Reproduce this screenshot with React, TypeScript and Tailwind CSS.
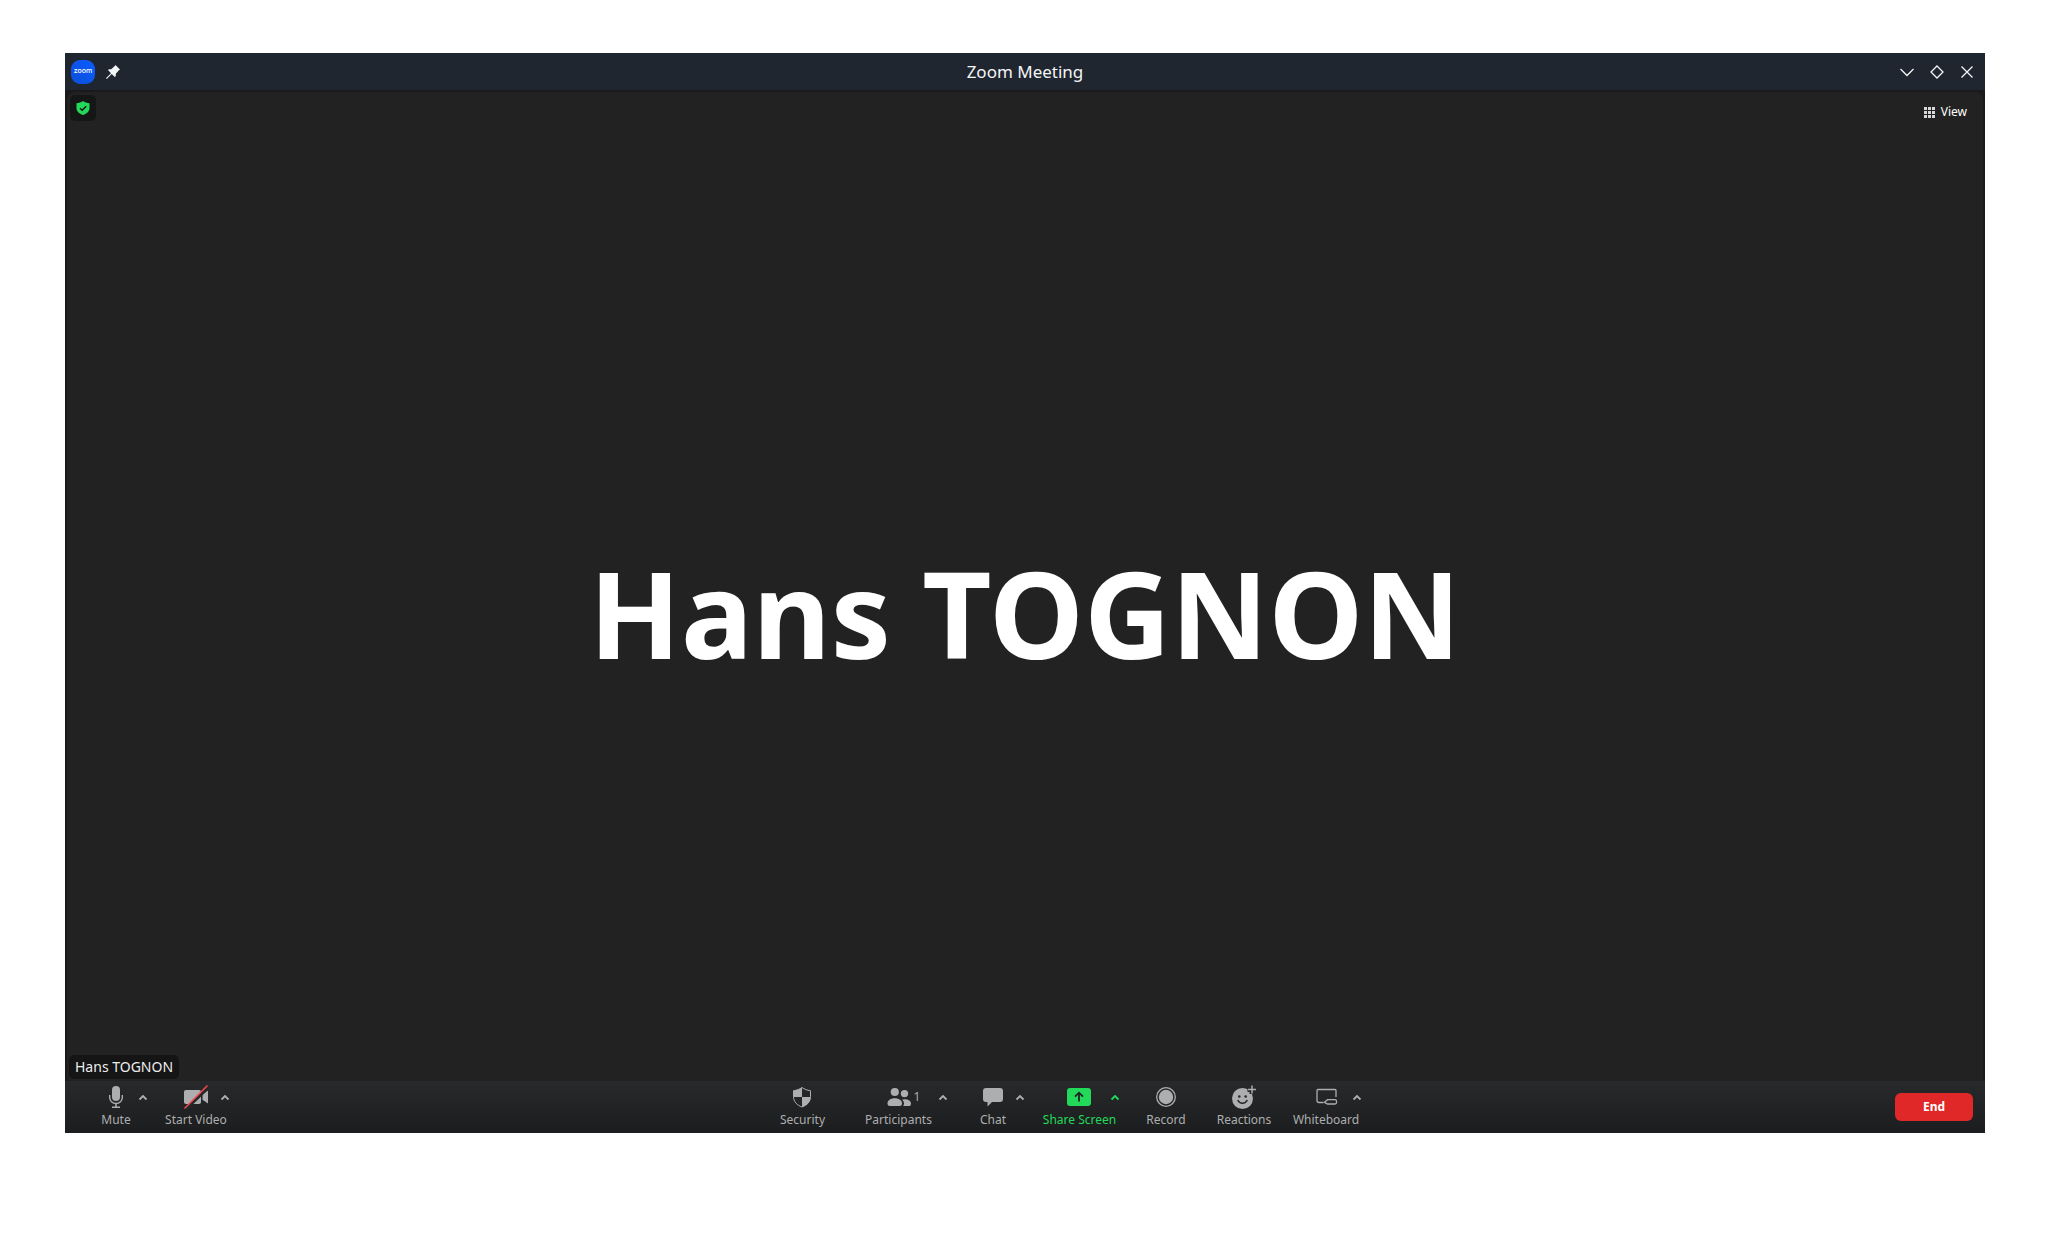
import type { ReactNode } from "react";

function Glyph({ children }: { children: ReactNode }) {
  return (
    <svg width="28" height="24" viewBox="0 0 28 24" fill="none" aria-hidden="true">
      {children}
    </svg>
  );
}

function Caret() {
  return (
    <svg width="10" height="8" viewBox="0 0 10 8" fill="none" stroke="currentColor" strokeWidth="1.8" aria-hidden="true">
      <path d="M1.5 6.500 5 3 8.500 6.500" />
    </svg>
  );
}

const MicIcon = () => (
  <Glyph>
    <rect x="10" y="1" width="8" height="15" rx="4" fill="currentColor" />
    <path d="M7.700 10v2.500a6.300 6 0 0 0 12.600 0V10" stroke="currentColor" strokeWidth="1.400" />
    <path d="M14 18.500V22M10 22.300h8" stroke="currentColor" strokeWidth="1.500" />
  </Glyph>
);

const VideoOffIcon = () => (
  <Glyph>
    <rect x="2" y="5" width="17" height="14" rx="2" fill="currentColor" />
    <path d="M20.500 9.200 26 5.500v13l-5.500-3.700z" fill="currentColor" />
    <path d="M3.500 24.500 27.500 1.500" stroke="#25272a" strokeWidth="3" />
    <path d="M2.500 23.500 25.500 .5" stroke="#f0484b" strokeWidth="1.500" />
  </Glyph>
);

const SecurityIcon = () => (
  <Glyph>
    <path
      d="M14 2.500c2.400 1.700 5 2.800 8.500 3.200v6c0 5-3.500 8.500-8.500 10.300-5-1.800-8.500-5.300-8.500-10.300v-6C9 5.300 11.600 4.200 14 2.500z"
      stroke="currentColor"
      strokeWidth="1"
    />
    <path d="M14 2.500V12H5.500V5.700C9 5.300 11.600 4.200 14 2.500z" fill="currentColor" />
    <path d="M14 12h8.500c0 5-3.500 8.500-8.500 10z" fill="currentColor" />
  </Glyph>
);

const ParticipantsIcon = () => (
  <Glyph>
    <circle cx="9.800" cy="7" r="4.100" fill="currentColor" />
    <circle cx="19.500" cy="8.600" r="3.700" fill="currentColor" />
    <path d="M2.500 18.500c0-3 3-5.200 7.200-5.200s7.300 2.200 7.300 5.200c0 1.700-1 2.500-2.500 2.500H5c-1.500 0-2.500-.8-2.500-2.500z" fill="currentColor" />
    <path d="M17 14.800c.8-.3 1.700-.5 2.700-.5 3.700 0 6.300 1.800 6.300 4.400 0 1.500-.9 2.300-2.300 2.300h-5.500c.5-.7.800-1.500.8-2.500 0-1.400-.7-2.700-2-3.700z" fill="currentColor" />
  </Glyph>
);

const ChatIcon = () => (
  <Glyph>
    <path d="M7 3h14a3 3 0 0 1 3 3v8a3 3 0 0 1-3 3h-8l-4.500 4.500V17H7a3 3 0 0 1-3-3V6a3 3 0 0 1 3-3z" fill="currentColor" />
  </Glyph>
);

const ShareIcon = () => (
  <Glyph>
    <rect x="2" y="3" width="24" height="18" rx="3" fill="currentColor" />
    <path d="M14 16.500V8M10 11.700 14 7.700l4 4" stroke="#222426" strokeWidth="1.800" />
  </Glyph>
);

const RecordIcon = () => (
  <Glyph>
    <circle cx="14" cy="12" r="9.300" stroke="currentColor" strokeWidth="1.300" />
    <circle cx="14" cy="12" r="7.200" fill="currentColor" />
  </Glyph>
);

const ReactionsIcon = () => (
  <Glyph>
    <circle cx="12.500" cy="13.500" r="10.500" fill="currentColor" />
    <path d="M22 0v9M17.500 4.500h9" stroke="#25272a" strokeWidth="5" />
    <path d="M22 .5v8M18 4.500h8" stroke="currentColor" strokeWidth="1.500" />
    <circle cx="9.300" cy="11.500" r="1.300" fill="#25272a" />
    <circle cx="15.700" cy="11.500" r="1.300" fill="#25272a" />
    <path d="M7.700 15c1 2.200 2.700 3.200 4.800 3.200s3.800-1 4.800-3.200" stroke="#25272a" strokeWidth="1.500" />
  </Glyph>
);

const WhiteboardIcon = () => (
  <Glyph>
    <path d="M11.500 17.500H7a2 2 0 0 1-2-2V5.500a1 1 0 0 1 1-1h17a1 1 0 0 1 1 1V12" stroke="currentColor" strokeWidth="1.300" />
    <path d="M12.500 17.300 15.500 14.700H23a1.500 1.500 0 0 1 1.500 1.500v1.300a1.500 1.500 0 0 1-1.500 1.500h-7.500z" stroke="currentColor" strokeWidth="1.300" />
  </Glyph>
);

type ToolProps = {
  label: string;
  icon: ReactNode;
  width: string;
  caret?: string;
  count?: number;
  accent?: boolean;
};

function Tool({ label, icon, width, caret, count, accent }: ToolProps) {
  return (
    <div className={`relative flex shrink-0 justify-center ${width} ${accent ? "text-[#23d959]" : "text-[#adaeaf]"}`}>
      <button type="button" className="flex flex-col items-center gap-[3px] pt-1">
        <span className="relative">
          {icon}
          {count !== undefined && (
            <span className="absolute top-1 left-full ml-px text-xs leading-4">{count}</span>
          )}
        </span>
        <span className="text-xs leading-4 whitespace-nowrap">{label}</span>
      </button>
      {caret && (
        <button type="button" aria-label={`${label} options`} className={`absolute top-3 left-1/2 ${caret}`}>
          <Caret />
        </button>
      )}
    </div>
  );
}

function TitleBar() {
  return (
    <header className="grid h-[37px] shrink-0 grid-cols-[1fr_auto_1fr] items-center bg-[#1f2630] text-[#f4f5f6]">
      <div className="flex items-center gap-[11px] pl-1.5">
        <span className="flex size-6 items-center justify-center rounded-[9px] bg-linear-to-bl from-[#0b5cff] to-[#0d4fd8] pb-0.5 font-['Inter',sans-serif] text-[7px] leading-none font-medium text-white">
          zoom
        </span>
        <button type="button" aria-label="Keep above others">
          <svg width="14" height="14" viewBox="0 0 14 14" fill="currentColor" aria-hidden="true">
            <path d="M9.500 0 14 4.500 12.700 5.500 9.800 8.800V11L8.800 12 5.700 8.900 1 13.700H.2V13L5 8.200 2 5.100 3 4.200H5.200L8.500 1.300z" />
          </svg>
        </button>
      </div>
      <h1 className="text-[17px] leading-6">Zoom Meeting</h1>
      <div className="flex items-center justify-end gap-3.5 pr-2.5">
        <button type="button" aria-label="Minimize">
          <svg width="16" height="16" viewBox="0 0 16 16" fill="none" stroke="currentColor" strokeWidth="1.300" aria-hidden="true">
            <path d="m1.500 5 6.500 6.500L14.500 5" />
          </svg>
        </button>
        <button type="button" aria-label="Restore">
          <svg width="16" height="16" viewBox="0 0 16 16" fill="none" stroke="currentColor" strokeWidth="1.300" aria-hidden="true">
            <path d="m8 2 6 6-6 6-6-6z" />
          </svg>
        </button>
        <button type="button" aria-label="Close">
          <svg width="16" height="16" viewBox="0 0 16 16" fill="none" stroke="currentColor" strokeWidth="1.300" aria-hidden="true">
            <path d="m2.500 2.500 11 11M13.500 2.500l-11 11" />
          </svg>
        </button>
      </div>
    </header>
  );
}

function Stage() {
  return (
    <main className="flex flex-1 bg-[#1a1a1a] px-0.5 pt-0.5">
      <div className="relative flex flex-1 items-center justify-center rounded-t-lg bg-[#222222] pt-[52px]">
        <button
          type="button"
          aria-label="Meeting information"
          className="absolute top-[3px] left-[3px] flex size-[26px] items-center justify-center rounded-[5px] bg-[#151716]"
        >
          <svg width="14" height="14" viewBox="0 0 14 14" fill="none" aria-hidden="true">
            <path d="M7 0c2 1.400 4 2.100 6.500 2.200V7c0 3.300-2.500 5.700-6.500 7C3 12.700.5 10.300.5 7V2.200C3 2.100 5 1.400 7 0z" fill="#23d959" />
            <path d="M4 7.200 6.200 9.300 10.200 5.200" stroke="#151716" strokeWidth="1.400" />
          </svg>
        </button>
        <button type="button" className="absolute top-3 right-4 flex items-center gap-1.5 text-xs leading-4 text-white">
          <svg width="11" height="11" viewBox="0 0 11 11" fill="#d8d8d8" aria-hidden="true">
            {[0, 4, 8].map((y) =>
              [0, 4, 8].map((x) => <rect key={`${x}-${y}`} x={x} y={y} width="3" height="3" />),
            )}
          </svg>
          View
        </button>
        <p className="text-[120px] leading-none font-bold whitespace-nowrap text-white">Hans TOGNON</p>
        <p className="absolute bottom-0.5 left-0.5 rounded-[5px] bg-[#151515] px-1.5 py-0.5 text-sm leading-5 text-[#ededed]">
          Hans TOGNON
        </p>
      </div>
    </main>
  );
}

function Toolbar() {
  return (
    <footer className="flex h-[52px] shrink-0 bg-linear-to-b from-[#27292b] to-[#1c1d1f]">
      <div className="flex flex-1 pl-[11px]">
        <Tool label="Mute" icon={<MicIcon />} width="w-20" caret="ml-[22px]" />
        <Tool label="Start Video" icon={<VideoOffIcon />} width="w-20" caret="ml-6" />
      </div>
      <nav aria-label="Meeting controls" className="flex pl-[82px]">
        <Tool label="Security" icon={<SecurityIcon />} width="w-[90px]" />
        <Tool label="Participants" icon={<ParticipantsIcon />} width="w-[102px]" caret="ml-[39px]" count={1} />
        <Tool label="Chat" icon={<ChatIcon />} width="w-[87px]" caret="ml-[22px]" />
        <Tool label="Share Screen" icon={<ShareIcon />} width="w-[86px]" caret="ml-[30px]" accent />
        <Tool label="Record" icon={<RecordIcon />} width="w-[87px]" />
        <Tool label="Reactions" icon={<ReactionsIcon />} width="w-[69px]" />
        <Tool label="Whiteboard" icon={<WhiteboardIcon />} width="w-[95px]" caret="ml-[26px]" />
      </nav>
      <div className="flex flex-1 items-center justify-end pr-3">
        <button type="button" className="h-7 w-[78px] rounded-md bg-[#e02828] text-xs leading-4 font-bold text-white">
          End
        </button>
      </div>
    </footer>
  );
}

export default function App() {
  return (
    <div className="flex min-h-screen flex-col bg-white px-[65px] pt-[53px] pb-[114px] font-['Noto_Sans',sans-serif]">
      <div className="flex flex-1 flex-col">
        <TitleBar />
        <Stage />
        <Toolbar />
      </div>
    </div>
  );
}
